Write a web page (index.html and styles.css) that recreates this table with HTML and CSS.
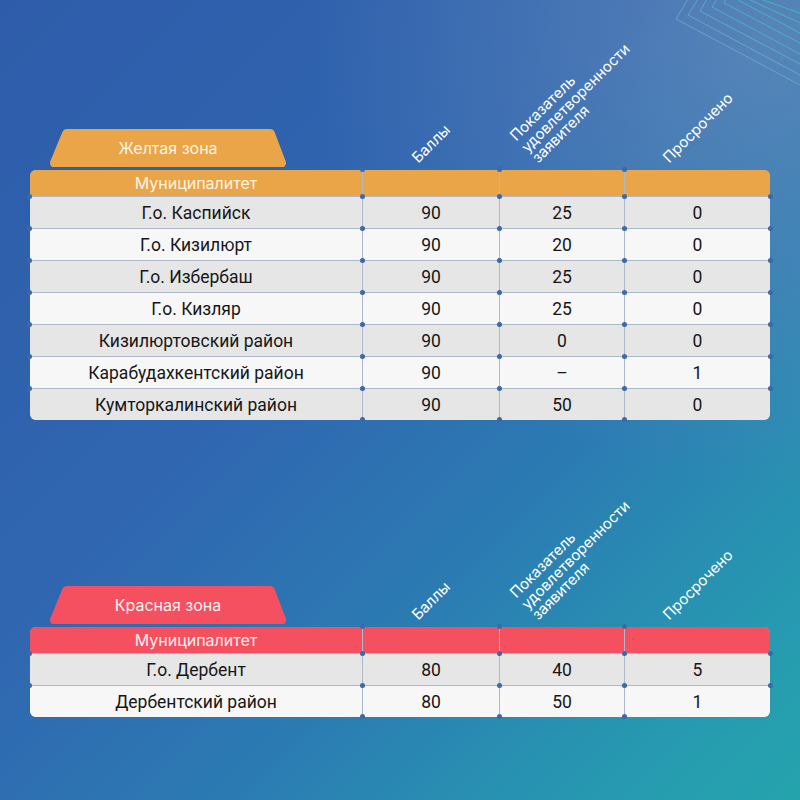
FILE: index.html
```html
<!DOCTYPE html>
<html lang="ru">
<head>
<meta charset="utf-8">
<title>Зоны</title>
<link rel="stylesheet" href="styles.css">
</head>
<body>
<svg class="deco" viewBox="0 0 130 110" width="130" height="110" aria-hidden="true">
  <polyline class="d0" points="18,-1 6,19 130,85"/>
  <polyline class="d1" points="28,-1 18,15 130,75"/>
  <polyline class="d2" points="37,-1 30,11 130,64"/>
  <polyline class="d3" points="47,-1 42,7 130,54"/>
  <polyline class="d4" points="56,-1 54,3 130,43"/>
  <polyline class="d5" points="66,-1 130,33"/>
  <polyline class="d6" points="78,-1 130,23"/>
  <polyline class="d7" points="90,-1 130,13"/>
</svg>
<main class="page">
  <section class="zone zone--yellow">
    <div class="zone-head">
      <div class="tab-cell">
        <div class="tab">
          <svg class="tab-shape" viewBox="0 0 236 38" width="236" height="38" aria-hidden="true"><polygon points="5,34 17,5 220,5 231,34"/></svg>
          <span class="tab-text">Желтая зона</span>
        </div>
      </div>
      <div class="col-label"><span class="label label--balls">Баллы</span></div>
      <div class="col-label"><span class="label label--sat">Показатель<br>удовлетворенности<br>заявителя</span></div>
      <div class="col-label"><span class="label label--late">Просрочено</span></div>
    </div>
    <div class="table">
      <div class="row head"><div class="cell">Муниципалитет</div><div class="cell"></div><div class="cell"></div><div class="cell"></div></div>
      <div class="row"><div class="cell">Г.о. Каспийск</div><div class="cell">90</div><div class="cell">25</div><div class="cell">0</div></div>
      <div class="row"><div class="cell">Г.о. Кизилюрт</div><div class="cell">90</div><div class="cell">20</div><div class="cell">0</div></div>
      <div class="row"><div class="cell">Г.о. Избербаш</div><div class="cell">90</div><div class="cell">25</div><div class="cell">0</div></div>
      <div class="row"><div class="cell">Г.о. Кизляр</div><div class="cell">90</div><div class="cell">25</div><div class="cell">0</div></div>
      <div class="row"><div class="cell">Кизилюртовский район</div><div class="cell">90</div><div class="cell">0</div><div class="cell">0</div></div>
      <div class="row"><div class="cell">Карабудахкентский район</div><div class="cell">90</div><div class="cell">–</div><div class="cell">1</div></div>
      <div class="row"><div class="cell">Кумторкалинский район</div><div class="cell">90</div><div class="cell">50</div><div class="cell">0</div></div>
    </div>
  </section>

  <section class="zone zone--red">
    <div class="zone-head">
      <div class="tab-cell">
        <div class="tab">
          <svg class="tab-shape" viewBox="0 0 236 38" width="236" height="38" aria-hidden="true"><polygon points="5,34 17,5 220,5 231,34"/></svg>
          <span class="tab-text">Красная зона</span>
        </div>
      </div>
      <div class="col-label"><span class="label label--balls">Баллы</span></div>
      <div class="col-label"><span class="label label--sat">Показатель<br>удовлетворенности<br>заявителя</span></div>
      <div class="col-label"><span class="label label--late">Просрочено</span></div>
    </div>
    <div class="table">
      <div class="row head"><div class="cell">Муниципалитет</div><div class="cell"></div><div class="cell"></div><div class="cell"></div></div>
      <div class="row"><div class="cell">Г.о. Дербент</div><div class="cell">80</div><div class="cell">40</div><div class="cell">5</div></div>
      <div class="row"><div class="cell">Дербентский район</div><div class="cell">80</div><div class="cell">50</div><div class="cell">1</div></div>
    </div>
  </section>
</main>
</body>
</html>
```
FILE: styles.css
```css
* { box-sizing: border-box; margin: 0; padding: 0; }

html, body { width: 800px; height: 800px; overflow: hidden; }

body {
  position: relative;
  font-family: Inter, "Noto Sans", sans-serif;
  background:
    radial-gradient(circle at 96% 4%, rgba(120, 150, 190, 0.55) 0%, rgba(120, 150, 190, 0) 42%),
    linear-gradient(135deg, #2e5caa 0%, #3066b0 40%, #2b7cb3 65%, #2797b1 85%, #25a4ad 100%);
}

.deco {
  position: absolute;
  top: 0;
  right: 0;
  fill: none;
  stroke-width: 1;
}
.deco .d0 { stroke: rgba(140, 215, 230, 0.4); }
.deco .d1 { stroke: rgba(120, 215, 225, 0.45); }
.deco .d2 { stroke: rgba(100, 215, 215, 0.5); }
.deco .d3 { stroke: rgba(80, 210, 205, 0.55); }
.deco .d4 { stroke: rgba(70, 210, 195, 0.6); }
.deco .d5 { stroke: rgba(65, 210, 190, 0.65); }
.deco .d6 { stroke: rgba(60, 210, 185, 0.65); }
.deco .d7 { stroke: rgba(60, 210, 185, 0.65); }

.page { padding: 129px 30px 0; }

.zone { --zone: #e9a548; --zone-text: #fff4e2; }
.zone--red { --zone: #f4505f; --zone-text: #fff0f0; margin-top: 166px; }

.zone-head {
  display: grid;
  grid-template-columns: 332px 136px 124px 145px;
  grid-template-rows: 41px;
  column-gap: 1px;
  height: 41px;
}

.tab-cell { display: flex; align-items: flex-start; padding-left: 20px; min-height: 0; }

.tab {
  position: relative;
  width: 236px;
  height: 38px;
  display: flex;
  align-items: center;
  justify-content: center;
}
.tab-shape {
  position: absolute;
  top: 0;
  left: 0;
}
.tab-shape polygon {
  fill: var(--zone);
  stroke: var(--zone);
  stroke-width: 10;
  stroke-linejoin: round;
}
.tab-text {
  position: relative;
  font-size: 16px;
  color: var(--zone-text);
}

.col-label { display: flex; align-items: flex-end; min-height: 0; }

.label {
  display: block;
  flex: none;
  white-space: nowrap;
  color: #ffffff;
  font-size: 15px;
  line-height: 15.5px;
  transform: rotate(-45deg);
  transform-origin: 0 100%;
  margin-bottom: 5px;
}
.label--balls { margin-left: 57px; }
.label--sat { margin-left: 40px; }
.label--late { margin-left: 46px; }

.table {
  display: flex;
  flex-direction: column;
  gap: 1px;
  background: #aeb8c8;
  border-radius: 6px;
}

.row {
  display: grid;
  grid-template-columns: 332px 136px 124px 145px;
  column-gap: 1px;
  height: 31px;
}
.row.head { height: 26px; }

.cell {
  position: relative;
  display: flex;
  align-items: center;
  justify-content: center;
  border-radius: 3px;
  font-family: Roboto, "Liberation Sans", sans-serif;
  font-size: 17.5px;
  color: #161616;
}
.row:nth-child(even) .cell { background: #e6e6e6; }
.row:nth-child(odd) .cell { background: #f7f7f7; }
.row.head .cell {
  background: var(--zone);
  font-family: Inter, "Noto Sans", sans-serif;
  font-size: 16px;
  color: var(--zone-text);
}

.row:first-child .cell:first-child { border-top-left-radius: 6px; }
.row:first-child .cell:last-child { border-top-right-radius: 6px; }
.row:last-child .cell:first-child { border-bottom-left-radius: 6px; }
.row:last-child .cell:last-child { border-bottom-right-radius: 6px; }

.cell::before,
.row:not(.head) .cell:last-child::after {
  content: "";
  position: absolute;
  top: -3px;
  width: 5px;
  height: 5px;
  border-radius: 50%;
  background: #3d69a5;
  z-index: 1;
}
.cell::before { left: -3px; }
.row:not(.head) .cell:last-child::after { right: -3px; }
.row.head .cell:first-child::before { display: none; }
.row:last-child .cell:not(:first-child)::before { box-shadow: 0 31px 0 #3d69a5; }
```
